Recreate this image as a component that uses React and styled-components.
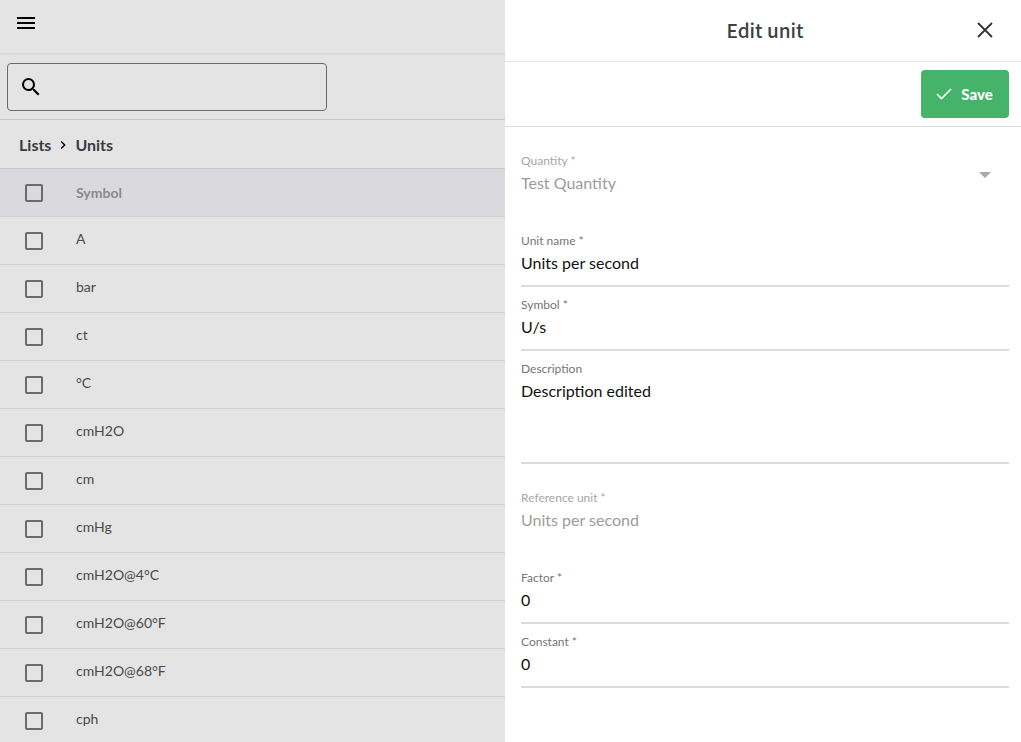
import styled, { createGlobalStyle, css } from 'styled-components';
import { MdChevronRight, MdMenu, MdSearch } from 'react-icons/md';

const GlobalStyle = createGlobalStyle`
  *, *::before, *::after {
    box-sizing: border-box;
  }

  body {
    margin: 0;
    background: #fff;
    font-family: Lato, sans-serif;
    color: #3c3f42;
  }

  button, input, select, textarea {
    margin: 0;
    font-family: inherit;
  }
`;

const Layout = styled.div`
  display: grid;
  grid-template-columns: minmax(0, 1fr) minmax(320px, 516px);
  height: 100vh;
  overflow: hidden;
`;

const ListPanel = styled.main`
  overflow: hidden;
  background: #e4e4e4;
`;

const IconButton = styled.button`
  display: flex;
  padding: 0;
  border: 0;
  background: none;
  color: ${props => props.$color || '#000'};
  cursor: pointer;
`;

const TopBar = styled.header`
  display: flex;
  align-items: flex-start;
  height: 55px;
  padding: 11px 14px;
  border-bottom: 2px solid #d9d9dc;
`;

const SearchBar = styled.div`
  padding: 8px 7px;
  border-bottom: 1px solid #c6c6c8;
`;

const SearchBox = styled.label`
  display: flex;
  align-items: center;
  gap: 8px;
  max-width: 320px;
  height: 48px;
  padding: 0 11px;
  border: 1px solid #6a6a6a;
  border-radius: 4px;
  color: #000;
`;

const SearchInput = styled.input`
  flex: 1;
  min-width: 0;
  border: 0;
  outline: 0;
  background: none;
  font-size: 16px;
`;

const Breadcrumb = styled.nav`
  display: flex;
  align-items: center;
  gap: 4px;
  height: 49px;
  padding: 2px 19px 0;
  border-bottom: 1px solid #c8c8ca;
  color: #000;
`;

const Crumb = styled.a`
  color: #3a3c3f;
  font-size: 16px;
  font-weight: 700;
  line-height: 20px;
  text-decoration: none;
`;

const Table = styled.table`
  width: 100%;
  border-collapse: separate;
  border-spacing: 0;
  text-align: left;
`;

const Row = styled.tr`
  height: 48px;
  background: ${props => (props.$head ? '#dad9de' : 'transparent')};
`;

const cell = css`
  height: 48px;
  padding: 0;
  border-bottom: 1px solid #cecece;
`;

const CheckCell = styled.td`
  ${cell}
  width: 76px;
  padding: 1px 0 0 25px;
`;

const HeadCell = styled.th`
  ${cell}
  color: #8a8a8e;
  font-size: 14px;
  font-weight: 700;
`;

const TextCell = styled.td`
  ${cell}
  padding-bottom: 4px;
  color: #4a4a4a;
  font-size: 14px;
`;

const Checkbox = styled.input`
  display: block;
  appearance: none;
  width: 18px;
  height: 18px;
  margin: 0;
  border: 2px solid #6b6b6b;
  border-radius: 2px;

  &:checked {
    background: #6b6b6b;
  }
`;

const Drawer = styled.aside`
  overflow: hidden;
  background: #fff;
`;

const DrawerHeader = styled.header`
  display: grid;
  grid-template-columns: 24px 1fr 24px;
  align-items: center;
  height: 62px;
  padding: 0 24px 2px 28px;
  border-bottom: 1px solid #e6e6e8;
`;

const DrawerTitle = styled.h2`
  grid-column: 2;
  margin: 0;
  color: #3c4043;
  font-family: 'Noto Sans CJK SC', 'Noto Sans', sans-serif;
  font-size: 19px;
  font-weight: 500;
  line-height: 24px;
  text-align: center;
`;

const DrawerActions = styled.div`
  display: flex;
  justify-content: flex-end;
  padding: 8px 12px;
  border-bottom: 1px solid #dcdde0;
`;

const SaveButton = styled.button`
  display: flex;
  align-items: center;
  justify-content: center;
  gap: 8px;
  min-width: 88px;
  height: 48px;
  padding: 0 14px 0 12px;
  border: 0;
  border-radius: 4px;
  background: #45b369;
  color: #fff;
  font-size: 15px;
  font-weight: 900;
  cursor: pointer;
`;

const Form = styled.form`
  display: flex;
  flex-direction: column;
  padding: 16px 12px 16px 16px;
`;

const FieldBox = styled.div`
  position: relative;
  display: flex;
  flex-direction: column;
  padding-top: 8px;
  margin-bottom: ${props => (props.$spaced ? '16px' : '0')};
  border-bottom: 2px solid ${props => (props.$disabled ? 'transparent' : '#dcdcdc')};
`;

const Label = styled.label`
  color: ${props => (props.$disabled ? '#a6a6a6' : '#757575')};
  font-size: 12px;
  line-height: 20px;
`;

const control = css`
  width: 100%;
  padding: 0;
  border: 0;
  outline: 0;
  background: none;
  color: #111;
  font-size: 16px;

  &:disabled {
    color: #9c9c9c;
    opacity: 1;
  }
`;

const Input = styled.input`
  ${control}
  height: 34px;
  padding-bottom: 11px;
`;

const Select = styled.select`
  ${control}
  appearance: none;
  height: 34px;
  padding-bottom: 11px;
`;

const Textarea = styled.textarea`
  ${control}
  display: block;
  height: 83px;
  line-height: 24px;
  resize: none;
`;

const Caret = styled.svg`
  position: absolute;
  top: 29px;
  right: 18px;
  pointer-events: none;
`;

const CloseIcon = () => (
  <svg width="24" height="24" viewBox="0 0 24 24" fill="none" stroke="currentColor" strokeWidth="1.8">
    <path d="M5 5l14 14M19 5L5 19" />
  </svg>
);

const CheckIcon = () => (
  <svg width="18" height="18" viewBox="0 0 18 18" fill="none" stroke="currentColor" strokeWidth="1.6">
    <path d="M2 9l4.5 4.5L16 4" />
  </svg>
);

const Field = ({ id, label, disabled, spaced, children }) => (
  <FieldBox $disabled={disabled} $spaced={spaced}>
    <Label htmlFor={id} $disabled={disabled}>
      {label}
    </Label>
    {children}
  </FieldBox>
);

const units = ['A', 'bar', 'ct', '°C', 'cmH2O', 'cm', 'cmHg', 'cmH2O@4°C', 'cmH2O@60°F', 'cmH2O@68°F', 'cph'];

const UnitTable = () => (
  <Table>
    <thead>
      <Row $head>
        <CheckCell>
          <Checkbox type="checkbox" aria-label="Select all" />
        </CheckCell>
        <HeadCell scope="col">Symbol</HeadCell>
      </Row>
    </thead>
    <tbody>
      {units.map(unit => (
        <Row key={unit}>
          <CheckCell>
            <Checkbox type="checkbox" aria-label={unit} />
          </CheckCell>
          <TextCell>{unit}</TextCell>
        </Row>
      ))}
    </tbody>
  </Table>
);

const EditUnit = () => (
  <Drawer>
    <DrawerHeader>
      <DrawerTitle>Edit unit</DrawerTitle>
      <IconButton type="button" aria-label="Close" $color="#333">
        <CloseIcon />
      </IconButton>
    </DrawerHeader>
    <DrawerActions>
      <SaveButton type="submit" form="unit-form">
        <CheckIcon />
        Save
      </SaveButton>
    </DrawerActions>
    <Form id="unit-form" onSubmit={e => e.preventDefault()}>
      <Field id="quantity" label="Quantity *" disabled spaced>
        <Select id="quantity" disabled>
          <option>Test Quantity</option>
        </Select>
        <Caret width="12" height="6" viewBox="0 0 12 6">
          <path d="M0 0h12L6 6z" fill="#a8a8a8" />
        </Caret>
      </Field>
      <Field id="name" label="Unit name *">
        <Input id="name" defaultValue="Units per second" />
      </Field>
      <Field id="symbol" label="Symbol *">
        <Input id="symbol" defaultValue="U/s" />
      </Field>
      <Field id="description" label="Description" spaced>
        <Textarea id="description" defaultValue="Description edited" />
      </Field>
      <Field id="reference" label="Reference unit *" disabled spaced>
        <Input id="reference" defaultValue="Units per second" disabled />
      </Field>
      <Field id="factor" label="Factor *">
        <Input id="factor" inputMode="decimal" defaultValue="0" />
      </Field>
      <Field id="constant" label="Constant *">
        <Input id="constant" inputMode="decimal" defaultValue="0" />
      </Field>
    </Form>
  </Drawer>
);

const App = () => (
  <>
    <GlobalStyle />
    <Layout>
      <ListPanel>
        <TopBar>
          <IconButton type="button" aria-label="Menu">
            <MdMenu size={24} />
          </IconButton>
        </TopBar>
        <SearchBar>
          <SearchBox>
            <MdSearch size={24} />
            <SearchInput type="text" aria-label="Search" />
          </SearchBox>
        </SearchBar>
        <Breadcrumb>
          <Crumb href="#lists">Lists</Crumb>
          <MdChevronRight size={16} />
          <Crumb href="#units">Units</Crumb>
        </Breadcrumb>
        <UnitTable />
      </ListPanel>
      <EditUnit />
    </Layout>
  </>
);

export default App;
